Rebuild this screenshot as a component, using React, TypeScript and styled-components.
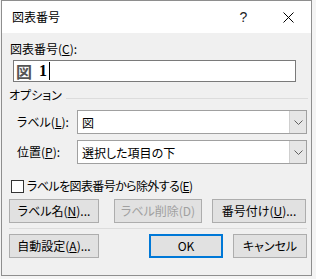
import styled, { createGlobalStyle } from "styled-components";

const GlobalStyle = createGlobalStyle`
  body {
    margin: 0;
    background: #f4f4f4;
    font-family: "Noto Sans CJK JP", "Noto Sans", sans-serif;
    font-feature-settings: "palt"; // proportional kana, closer to Yu Gothic UI
    font-size: 12px;
    color: #000;
  }
`;

const Dialog = styled.div`
  box-sizing: border-box;
  width: 311px;
  height: 276px;
  margin-left: 1px;
  border: 1px solid #8e8e8e;
  background: #f0f0f0;
  display: flex;
  flex-direction: column;
`;

const TitleBar = styled.div`
  height: 32px;
  background: #fff;
  display: flex;
  align-items: center;
  padding-left: 10px;
`;

const TitleText = styled.div`
  flex: 1;
  font-size: 12px;
  line-height: 16px;
`;

const TitleButton = styled.div`
  width: 45px;
  height: 32px;
  display: flex;
  align-items: center;
  justify-content: center;
  font-family: "Liberation Sans", sans-serif;
  font-size: 14px;
  color: #222;
`;

const Body = styled.div`
  flex: 1;
  display: flex;
  flex-direction: column;
  padding: 8px 4px 0 7px;
`;

const FieldLabel = styled.div`
  line-height: 16px;
  padding-left: 1px;
`;

const CaptionInput = styled.div`
  box-sizing: border-box;
  height: 22px;
  margin: 3px 11px 0 4px;
  border: 1px solid #7a7a7a;
  background: #fff;
  display: flex;
  align-items: center;
  padding-left: 2px;
  font-weight: 700;
  font-size: 16px;
`;

const CaptionLabel = styled.span`
  color: #555;
  font-family: "Noto Sans CJK JP", sans-serif;
`;

const CaptionNumber = styled.span`
  font-family: "Liberation Serif", serif;
  margin-left: 7px;
`;

const Caret = styled.span`
  display: inline-block;
  width: 1px;
  height: 18px;
  margin-left: 2px;
  background: #000;
`;

const GroupHeading = styled.div`
  display: flex;
  align-items: center;
  gap: 4px;
  margin: 5px -1px 0 0;
  line-height: 16px;
  &::after {
    content: "";
    flex: 1;
    height: 1px;
    margin-top: 6px;
    background: #dcdcdc;
  }
`;

const FormRow = styled.div<{ $top: number }>`
  display: flex;
  align-items: center;
  margin-top: ${(p) => p.$top}px;
  padding-left: 8px;
`;

const RowLabel = styled.div`
  width: 60px;
  line-height: 16px;
`;

const Combo = styled.div`
  box-sizing: border-box;
  flex: 1;
  height: 24px;
  border: 1px solid #a0a0a0;
  background: #fff;
  display: flex;
  align-items: stretch;
`;

const ComboText = styled.div`
  flex: 1;
  display: flex;
  align-items: center;
  padding-left: 4px;
`;

const ComboButton = styled.div`
  width: 16px;
  display: flex;
  align-items: center;
  justify-content: center;
  background: #e6e6e6;
  border-left: 1px solid #cfcfcf;
`;

const CheckRow = styled.label`
  display: flex;
  align-items: center;
  margin-top: 14px;
  padding-left: 2px;
  line-height: 16px;
  letter-spacing: -0.6px;
`;

const CheckBox = styled.span`
  box-sizing: border-box;
  width: 13px;
  height: 13px;
  border: 1px solid #333;
  background: #fff;
  margin-right: 3px;
`;

const ButtonRow = styled.div<{ $top: number }>`
  display: flex;
  align-items: center;
  margin-top: ${(p) => p.$top}px;
`;

const Button = styled.div<{ $w: number; $gap?: number; $disabled?: boolean; $default?: boolean }>`
  box-sizing: border-box;
  width: ${(p) => p.$w}px;
  height: 24px;
  margin-right: ${(p) => p.$gap ?? 0}px;
  display: flex;
  align-items: center;
  justify-content: center;
  background: #e1e1e1;
  border: ${(p) => (p.$default ? "2px solid #0078d7" : "1px solid #adadad")};
  color: ${(p) => (p.$disabled ? "#a0a0a0" : "#000")};
  line-height: 16px;
  u {
    text-decoration-thickness: 1px;
    text-underline-offset: 1px;
  }
`;

const Spacer = styled.div`
  flex: 1;
`;

const Separator = styled.div`
  height: 1px;
  background: #dcdcdc;
  margin-top: 5px;
`;

const Chevron = () => (
  <svg width="9" height="5" viewBox="0 0 9 5">
    <path d="M0.5 0.5 L4.5 4.5 L8.5 0.5" fill="none" stroke="#606060" strokeWidth="1" />
  </svg>
);

const CloseIcon = () => (
  <svg width="11" height="11" viewBox="0 0 11 11">
    <path d="M0.5 0.5 L10.5 10.5 M10.5 0.5 L0.5 10.5" stroke="#000" strokeWidth="1" />
  </svg>
);

export default function App() {
  return (
    <>
      <GlobalStyle />
      <Dialog>
        <TitleBar>
          <TitleText>図表番号</TitleText>
          <TitleButton>?</TitleButton>
          <TitleButton>
            <CloseIcon />
          </TitleButton>
        </TitleBar>
        <Body>
          <FieldLabel>
            図表番号(<u>C</u>):
          </FieldLabel>
          <CaptionInput>
            <CaptionLabel>図</CaptionLabel>
            <CaptionNumber>1</CaptionNumber>
            <Caret />
          </CaptionInput>

          <GroupHeading>オプション</GroupHeading>
          <FormRow $top={7}>
            <RowLabel>
              ラベル(<u>L</u>):
            </RowLabel>
            <Combo>
              <ComboText>図</ComboText>
              <ComboButton>
                <Chevron />
              </ComboButton>
            </Combo>
          </FormRow>
          <FormRow $top={6}>
            <RowLabel>
              位置(<u>P</u>):
            </RowLabel>
            <Combo>
              <ComboText>選択した項目の下</ComboText>
              <ComboButton>
                <Chevron />
              </ComboButton>
            </Combo>
          </FormRow>

          <CheckRow>
            <CheckBox />
            ラベルを図表番号から除外する(<u>E</u>)
          </CheckRow>

          <ButtonRow $top={5}>
            <Button $w={90} $gap={15}>
              ラベル名(<u>N</u>)...
            </Button>
            <Button $w={88} $gap={10} $disabled>
              ラベル削除(D)
            </Button>
            <Button $w={94}>
              番号付け(<u>U</u>)...
            </Button>
          </ButtonRow>
          <Separator />
          <ButtonRow $top={5}>
            <Button $w={90}>
              自動設定(<u>A</u>)...
            </Button>
            <Spacer />
            <Button $w={74} $gap={10} $default>
              OK
            </Button>
            <Button $w={74}>キャンセル</Button>
          </ButtonRow>
        </Body>
      </Dialog>
    </>
  );
}
